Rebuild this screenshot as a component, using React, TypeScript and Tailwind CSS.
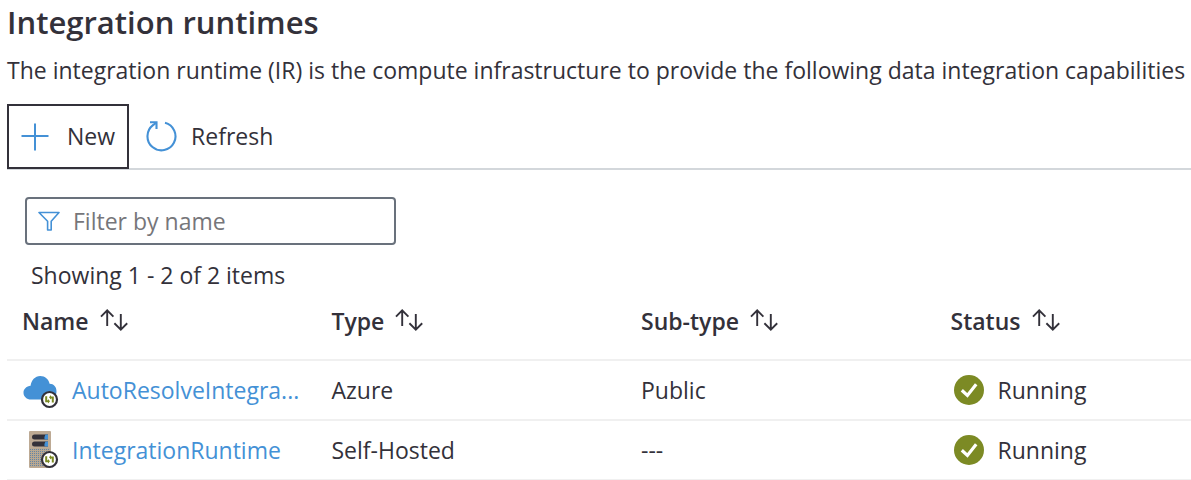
import type { ReactNode } from "react";

function PlusIcon() {
  return (
    <svg viewBox="0 0 28 28" className="size-7" fill="none" stroke="#4491d6" strokeWidth="2" aria-hidden="true">
      <path d="M14 0.5V27.5M0.5 13H27.5" />
    </svg>
  );
}

function RefreshIcon() {
  return (
    <svg viewBox="0 0 32 32" className="size-8" fill="none" stroke="#4491d6" strokeWidth="2.1" aria-hidden="true">
      <path d="M20 2.800A14 14 0 1 1 8 5.200L11 3" />
      <path d="M5 2.200H11.500V9" />
    </svg>
  );
}

function FilterIcon() {
  return (
    <svg viewBox="0 0 22 20" className="h-5 w-[22px] shrink-0" fill="none" stroke="#4491d6" strokeWidth="1.6" strokeLinejoin="round" aria-hidden="true">
      <path d="M1 1.5H21L13.2 10.3V19H9.6V10.3Z" />
    </svg>
  );
}

function SortIcon() {
  return (
    <svg viewBox="0 0 28 24" className="h-6 w-7" fill="none" stroke="#33313a" strokeWidth="1.9" aria-hidden="true">
      <path d="M7.2 17V1.5M1 7.7L7.2 1.4L13.4 7.7" />
      <path d="M20.8 5V20.5M14.4 14.3L20.8 20.6L27.2 14.3" />
    </svg>
  );
}

function RuntimeBadge() {
  return (
    <g>
      <circle cx="27.500" cy="28.500" r="7.500" fill="#fff" stroke="#33313a" strokeWidth="2.2" />
      <path d="M24.200 25.200V30.200H27" fill="none" stroke="#7c8a24" strokeWidth="2" />
      <path d="M28 26.400H30.800V31.600" fill="none" stroke="#7c8a24" strokeWidth="2" />
      <path d="M26 28L28 30.300L26 32.600Z M29 24L27 26.300L29 28.600Z" fill="#7c8a24" />
    </g>
  );
}

function CloudIcon() {
  return (
    <svg viewBox="0 0 38 38" className="size-[38px] shrink-0" aria-hidden="true">
      <path
        d="M9 28.5C4.800 28.500 1.500 25.500 1.500 21.700C1.500 17.900 4.700 15.200 8.600 14.800C9.200 9.300 13.100 5 18.200 5C23.200 5 26.500 8.200 27.600 12.700C31.800 12.800 34.500 16 34.500 20.300C34.500 25.100 31.800 28.500 27.500 28.500Z"
        fill="#4491d6"
      />
      <RuntimeBadge />
    </svg>
  );
}

function ServerIcon() {
  return (
    <svg viewBox="0 0 38 38" className="size-[38px] shrink-0" aria-hidden="true">
      <defs>
        <pattern id="server-dots" width="2" height="2" patternUnits="userSpaceOnUse">
          <rect width="2" height="2" fill="#b8a892" />
          <rect width="1" height="1" fill="#6484a4" />
        </pattern>
      </defs>
      <rect x="7" y="0" width="22" height="37" rx="1" fill="#bdaa94" />
      <rect x="8" y="17" width="20" height="19" fill="url(#server-dots)" />
      <path d="M12.500 3.500H26V8.500H12.500Q10 8.500 10 6Q10 3.500 12.500 3.500Z" fill="#33313a" />
      <path d="M12.500 10.500H26V15.500H12.500Q10 15.500 10 13Q10 10.500 12.500 10.500Z" fill="#33313a" />
      <path d="M26 3.500V8.500H23Q21.500 7.500 23.500 3.500Z M26 10.500V15.500H23Q21.500 14.500 23.500 10.500Z" fill="#4491d6" />
      <RuntimeBadge />
    </svg>
  );
}

function RunningIcon() {
  return (
    <svg viewBox="0 0 30 30" className="size-[30px] shrink-0" aria-hidden="true">
      <circle cx="15" cy="15" r="15" fill="#7c8a24" />
      <path d="M7.800 15.300L13.400 20.400L22.200 9.300" fill="none" stroke="#fff" strokeWidth="3.200" />
    </svg>
  );
}

const columns = ["Name", "Type", "Sub-type", "Status"];

interface Runtime {
  name: string;
  icon: ReactNode;
  type: string;
  subType: string;
  status: string;
}

const runtimes: Runtime[] = [
  { name: "AutoResolveIntegra...", icon: <CloudIcon />, type: "Azure", subType: "Public", status: "Running" },
  { name: "IntegrationRuntime", icon: <ServerIcon />, type: "Self-Hosted", subType: "---", status: "Running" },
];

export default function App() {
  return (
    <main className="overflow-x-hidden bg-white pl-[7px] font-['Open_Sans','Noto_Sans',sans-serif] text-[23px] text-[#33313a]">
      <h1 className="pt-0.5 text-[31px] leading-10 font-semibold">Integration runtimes</h1>
      <p className="pt-2.5 pb-4 leading-9 whitespace-nowrap">
        The integration runtime (IR) is the compute infrastructure to provide the following data integration
        capabilities
      </p>

      <div className="flex h-[66px] border-b-2 border-[#d3d7db]">
        <button type="button" className="-mb-0.5 flex h-[65px] items-center gap-[18px] border-2 border-[#33313a] px-3">
          <PlusIcon />
          New
        </button>
        <button type="button" className="flex items-center gap-3.5 px-4">
          <RefreshIcon />
          Refresh
        </button>
      </div>

      <div className="mt-[27px] ml-[18px] flex h-12 w-[371px] items-center gap-[13px] rounded-sm border-2 border-[#69717c] px-[11px]">
        <FilterIcon />
        <input
          type="text"
          aria-label="Filter by name"
          placeholder="Filter by name"
          className="min-w-0 flex-1 bg-transparent outline-none placeholder:text-[#76767a]"
        />
      </div>

      <p className="mt-3 ml-6 leading-9">Showing 1 - 2 of 2 items</p>

      <table className="w-[calc(100%+54px)] table-fixed border-collapse text-left">
        <thead>
          <tr className="h-[67px] border-b-2 border-[#f0f0f0]">
            {columns.map((column) => (
              <th key={column} scope="col" className="pt-2.5 pl-[15px] align-top font-semibold">
                <button type="button" className="flex items-center gap-[11px] leading-9">
                  {column}
                  <SortIcon />
                </button>
              </th>
            ))}
          </tr>
        </thead>
        <tbody>
          {runtimes.map((runtime) => (
            <tr key={runtime.name} className="h-[60px] border-b-2 border-[#f0f0f0]">
              <td className="pl-[15px]">
                <a href="#" className="flex items-center gap-3 whitespace-nowrap text-[#4491d6]">
                  {runtime.icon}
                  {runtime.name}
                </a>
              </td>
              <td className="pl-[15px]">{runtime.type}</td>
              <td className="pl-[15px]">{runtime.subType}</td>
              <td className="pl-[18px]">
                <span className="flex items-center gap-3.5">
                  <RunningIcon />
                  {runtime.status}
                </span>
              </td>
            </tr>
          ))}
        </tbody>
      </table>
    </main>
  );
}
